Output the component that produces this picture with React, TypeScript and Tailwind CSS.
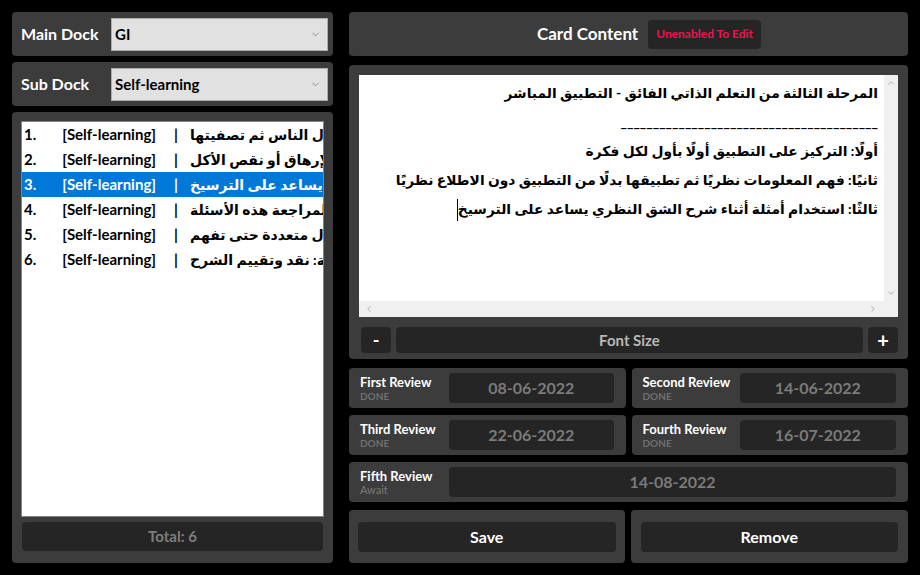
import { ChevronDown, ChevronUp, ChevronLeft, ChevronRight } from "lucide-react";

const font = { fontFamily: '"Lato", "DejaVu Sans", sans-serif' };

const items = [
  { n: "1.", text: "جمع الأسئلة من خلال سؤال الناس ثم تصفيتها" },
  { n: "2.", text: "تجنب المذاكرة في أوقات الإرهاق أو نقص الأكل" },
  { n: "3.", text: "استخدام أمثلة أثناء شرح الشق النظري يساعد على الترسيخ" },
  { n: "4.", text: "تخصيص أوقات محددة لمراجعة هذه الأسئلة" },
  { n: "5.", text: "شرح المعلومة بأشكال متعددة حتى تفهم" },
  { n: "6.", text: "المرحلة الثالثة: نقد وتقييم الشرح" },
];

const lines = [
  "المرحلة الثالثة من التعلم الذاتي الفائق - التطبيق المباشر",
  "________________________________________",
  "أولًا: التركيز على التطبيق أولًا بأول لكل فكرة",
  "ثانيًا: فهم المعلومات نظريًا ثم تطبيقها بدلًا من التطبيق دون الاطلاع نظريًا",
];

function DockSelect({ label, value }: { label: string; value: string }) {
  return (
    <div className="h-[44px] rounded-[4px] bg-[#3c3c3c] flex items-center pl-[9px] pr-[5px]">
      <span className="w-[90px] text-[16px] font-bold text-white">{label}</span>
      <div className="flex-1 h-[33px] bg-[#e1e1e1] border border-[#adadad] flex items-center pl-[3px] pr-[6px]">
        <span className="flex-1 text-[15px] font-bold text-black">{value}</span>
        <ChevronDown className="w-[11px] h-[11px] text-[#6d6d6d]" strokeWidth={1.5} />
      </div>
    </div>
  );
}

function Review({
  title,
  status,
  date,
  labelW,
}: {
  title: string;
  status: string;
  date: string;
  labelW: string;
}) {
  return (
    <div className="flex-1 min-w-0 h-[40px] rounded-[4px] bg-[#3c3c3c] flex items-center pl-[11px] pr-[12px] gap-[6px]">
      <div className={`${labelW} shrink-0 flex flex-col leading-none`}>
        <span className="text-[13px] font-bold text-white whitespace-nowrap">{title}</span>
        <span
          className={
            status === "DONE"
              ? "text-[10px] font-bold text-[#6f6f6f] mt-[2px]"
              : "text-[11px] text-[#7a7a7a] mt-[1px]"
          }
        >
          {status}
        </span>
      </div>
      <div className="flex-1 h-[30px] rounded-[4px] bg-[#252525] flex items-center justify-center text-[16px] font-bold text-[#7b7b7b]">
        {date}
      </div>
    </div>
  );
}

export default function App() {
  return (
    <div className="w-[920px] h-[575px] bg-black flex gap-[16px] p-[12px]" style={font}>
      {/* left column */}
      <div className="w-[321px] flex flex-col gap-[6px]">
        <DockSelect label="Main Dock" value="GI" />
        <DockSelect label="Sub Dock" value="Self-learning" />
        <div className="flex-1 rounded-[4px] bg-[#3c3c3c] flex flex-col pt-[9px] px-[9px] pb-[12px]">
          <div className="flex-1 bg-white border border-[#828282] overflow-hidden">
            {items.map((it, i) => (
              <div
                key={i}
                className={`h-[25px] flex items-center whitespace-nowrap text-[15px] font-bold pl-[2px] ${
                  i === 2 ? "bg-[#0078d7] text-white" : "text-black"
                }`}
              >
                <span>{it.n}</span>
                <span className="ml-[26px]">[Self-learning]</span>
                <span className="ml-[18px]">|</span>
                <span className="ml-[12px] text-[14px]" dir="rtl">
                  {it.text}
                </span>
              </div>
            ))}
          </div>
          <div className="mt-[5px] mx-[1px] h-[29px] rounded-[4px] bg-[#252525] flex items-center justify-center text-[15px] font-bold text-[#7d7d7d]">
            Total: 6
          </div>
        </div>
      </div>

      {/* right column */}
      <div className="w-[559px] flex flex-col">
        <div className="h-[44px] rounded-[4px] bg-[#3c3c3c] flex items-center pl-[188px] gap-[10px]">
          <span className="text-[17px] font-bold text-white">Card Content</span>
          <span className="h-[29px] px-[8px] rounded-[4px] bg-[#252525] flex items-center text-[12px] font-bold text-[#f0124f]">
            Unenabled To Edit
          </span>
        </div>

        <div className="mt-[9px] h-[294px] rounded-[4px] bg-[#3c3c3c] flex flex-col pt-[10px] pl-[10px] pr-[10px] pb-[6px]">
          <div className="h-[243px] flex flex-col bg-[#f0f0f0]">
            <div className="flex-1 min-h-0 flex">
              <div
                className="flex-1 min-w-0 bg-white overflow-hidden pr-[6px] pt-[3px] text-[13.8px] font-bold text-black leading-[29px] whitespace-nowrap"
                dir="rtl"
              >
                {lines.map((l, i) => (
                  <div key={i}>{l}</div>
                ))}
                <div>
                  ثالثًا: استخدام أمثلة أثناء شرح الشق النظري يساعد على الترسيخ
                  <span className="inline-block w-px h-[22px] bg-black align-middle" />
                </div>
              </div>
              <div className="w-[14px] shrink-0 flex flex-col items-center justify-between py-[3px]">
                <ChevronUp className="w-[10px] h-[10px] text-[#a3a3a3]" strokeWidth={2} />
                <ChevronDown className="w-[10px] h-[10px] text-[#a3a3a3]" strokeWidth={2} />
              </div>
            </div>
            <div className="h-[16px] shrink-0 flex items-center justify-between pl-[5px] pr-[20px]">
              <ChevronLeft className="w-[10px] h-[10px] text-[#a3a3a3]" strokeWidth={2} />
              <ChevronRight className="w-[10px] h-[10px] text-[#a3a3a3]" strokeWidth={2} />
            </div>
          </div>
          <div className="mt-[10px] h-[26px] flex gap-[5px] pl-[2px]">
            <div className="w-[30px] rounded-[4px] bg-[#252525] flex items-center justify-center text-[18px] font-bold text-white">
              -
            </div>
            <div className="flex-1 rounded-[4px] bg-[#252525] flex items-center justify-center text-[15px] font-bold text-[#b8b8b8]">
              Font Size
            </div>
            <div className="w-[30px] rounded-[4px] bg-[#252525] flex items-center justify-center text-[20px] font-bold text-white">
              +
            </div>
          </div>
        </div>

        <div className="mt-[9px] flex gap-[6px]">
          <Review title="First Review" status="DONE" date="08-06-2022" labelW="w-[83px]" />
          <Review title="Second Review" status="DONE" date="14-06-2022" labelW="w-[91px]" />
        </div>
        <div className="mt-[7px] flex gap-[6px]">
          <Review title="Third Review" status="DONE" date="22-06-2022" labelW="w-[83px]" />
          <Review title="Fourth Review" status="DONE" date="16-07-2022" labelW="w-[91px]" />
        </div>
        <div className="mt-[7px] flex">
          <Review title="Fifth Review" status="Await" date="14-08-2022" labelW="w-[83px]" />
        </div>

        <div className="mt-[8px] h-[53px] flex gap-[6px]">
          <div className="flex-1 rounded-[4px] bg-[#3c3c3c] flex items-center px-[9px]">
            <div className="flex-1 h-[30px] rounded-[4px] bg-[#252525] flex items-center justify-center text-[16px] font-bold text-white">
              Save
            </div>
          </div>
          <div className="flex-1 rounded-[4px] bg-[#3c3c3c] flex items-center px-[10px]">
            <div className="flex-1 h-[30px] rounded-[4px] bg-[#252525] flex items-center justify-center text-[16px] font-bold text-white">
              Remove
            </div>
          </div>
        </div>
      </div>
    </div>
  );
}
